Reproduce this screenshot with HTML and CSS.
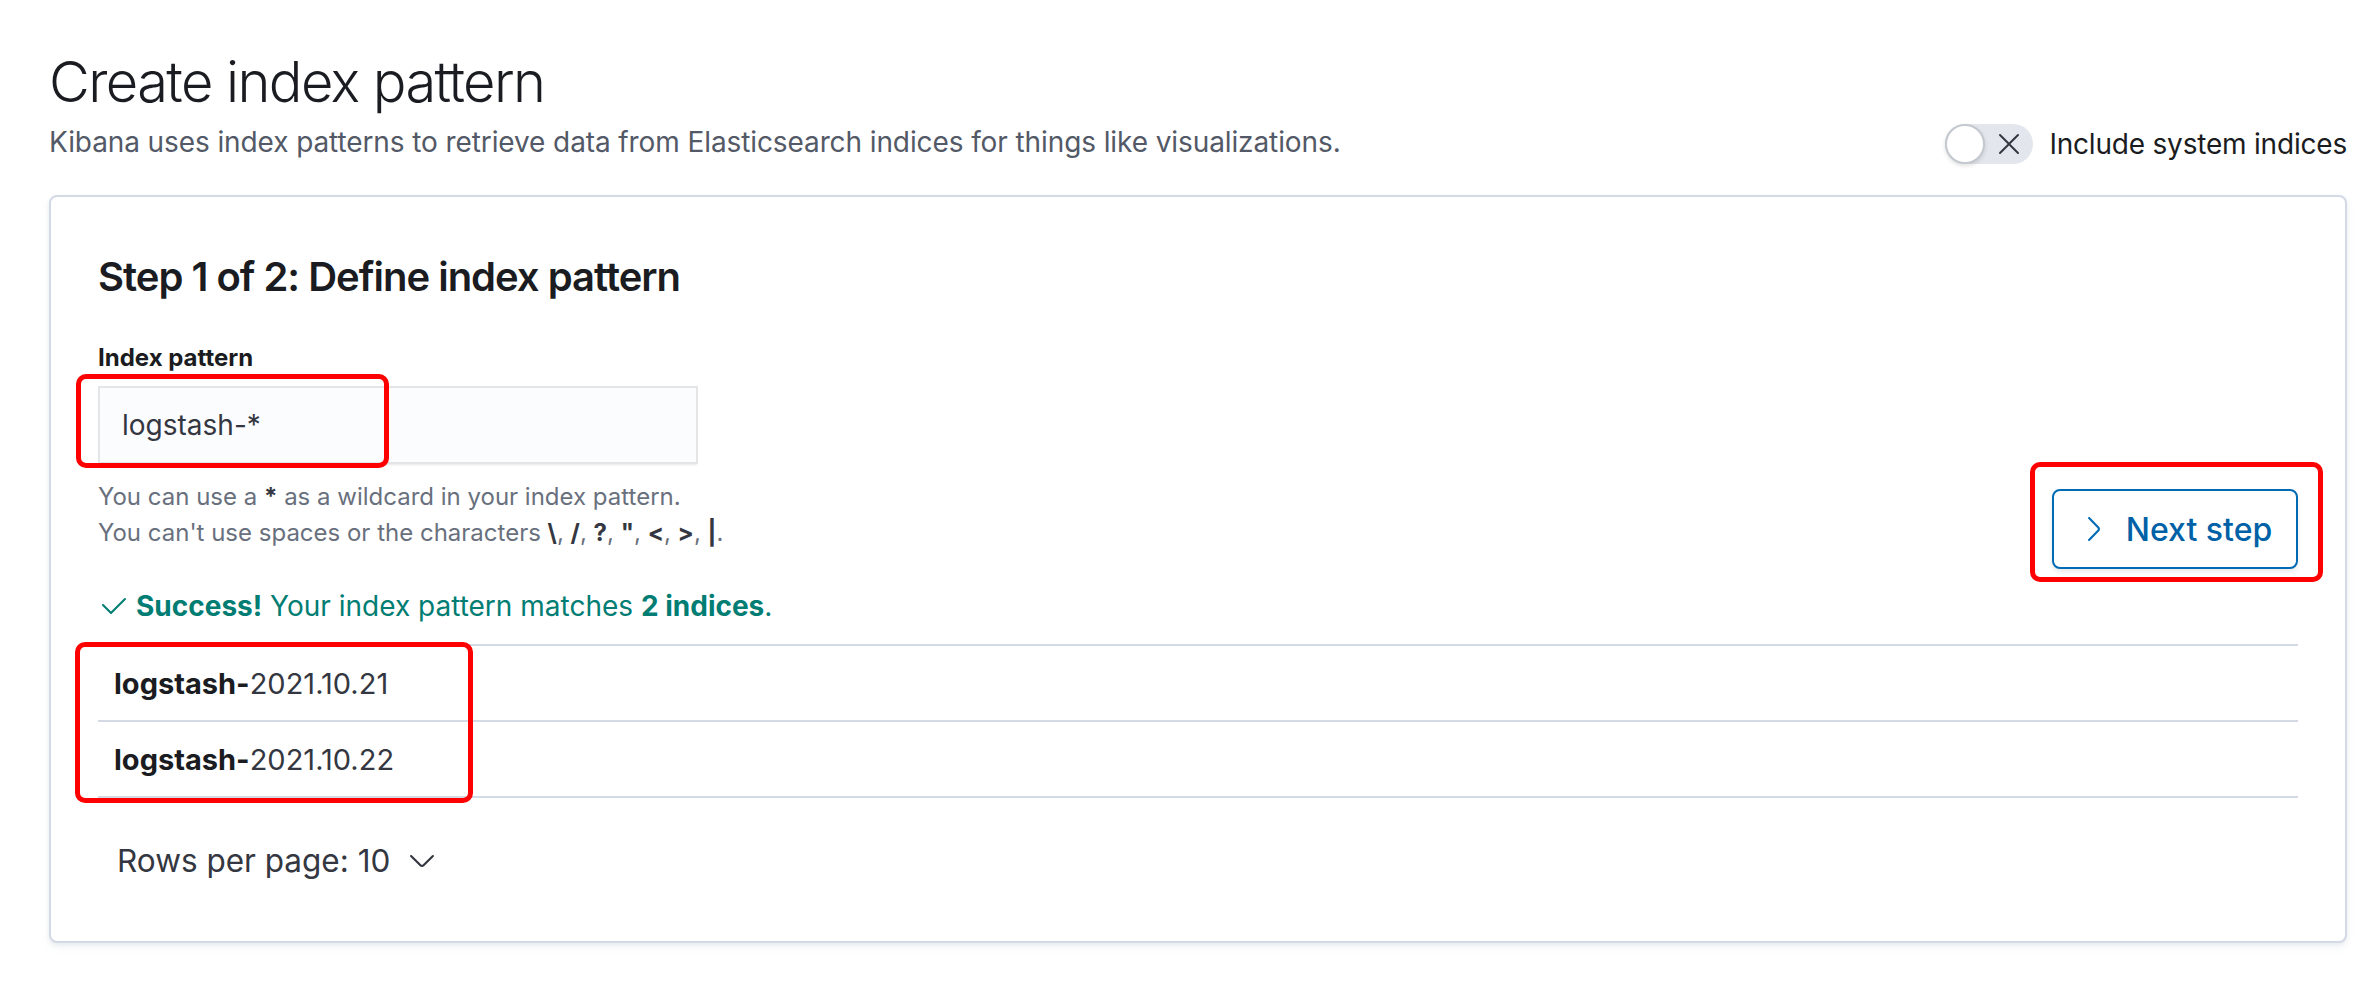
FILE: index.html
```html
<!DOCTYPE html>
<html lang="en">
<head>
<meta charset="utf-8">
<title>Create index pattern</title>
<link rel="stylesheet" href="styles.css">
</head>
<body>
<div class="page">
  <header class="page-header">
    <div class="page-title">
      <h1 class="title">Create index pattern</h1>
      <p class="subtitle">Kibana uses index patterns to retrieve data from Elasticsearch indices for things like visualizations.</p>
    </div>
    <label class="switch">
      <span class="switch-track">
        <span class="switch-knob"></span>
        <svg class="switch-icon" viewBox="0 0 16 16" width="32" height="32"><path d="M7.293 8L3.146 3.854a.5.5 0 11.708-.708L8 7.293l4.146-4.147a.5.5 0 01.708.708L8.707 8l4.147 4.146a.5.5 0 01-.708.708L8 8.707l-4.146 4.147a.5.5 0 01-.708-.708L7.293 8z"/></svg>
      </span>
      <span class="switch-label">Include system indices</span>
    </label>
  </header>

  <section class="panel">
    <h2 class="step-title">Step 1 of 2: Define index pattern</h2>
    <div class="form-row">
      <div class="form">
        <div class="field-label">Index pattern</div>
        <div class="field-input">logstash-*</div>
        <div class="help">
          <div>You can use a <strong>*</strong> as a wildcard in your index pattern.</div>
          <div>You can't use spaces or the characters <strong>\</strong>, <strong>/</strong>, <strong>?</strong>, <strong>"</strong>, <strong>&lt;</strong>, <strong>&gt;</strong>, <strong>|</strong>.</div>
        </div>
      </div>
      <button class="btn">
        <svg class="btn-icon" viewBox="0 0 16 16" width="32" height="32"><path d="M5.157 13.069l4.611-4.685a.546.546 0 000-.768L5.158 2.93a.552.552 0 010-.771.53.53 0 01.759 0l4.61 4.684c.631.641.63 1.672 0 2.312l-4.61 4.684a.53.53 0 01-.76 0 .552.552 0 010-.771z"/></svg>
        <span>Next step</span>
      </button>
    </div>

    <div class="success">
      <svg class="success-icon" viewBox="0 0 16 16" width="32" height="32"><path d="M6.5 12a.502.502 0 01-.354-.146l-4-4a.5.5 0 01.708-.708L6.5 10.793l6.646-6.647a.5.5 0 01.708.708l-7 7A.502.502 0 016.5 12"/></svg>
      <span><strong>Success!</strong> Your index pattern matches <strong>2 indices</strong>.</span>
    </div>

    <div class="table">
      <div class="row"><strong>logstash-</strong>2021.10.21</div>
      <div class="row"><strong>logstash-</strong>2021.10.22</div>
    </div>

    <div class="pagination">
      <span>Rows per page: 10</span>
      <svg class="page-icon" viewBox="0 0 16 16" width="32" height="32"><path d="M13.069 5.157L8.384 9.768a.546.546 0 01-.768 0L2.93 5.158a.552.552 0 00-.771 0 .53.53 0 000 .759l4.684 4.61c.641.631 1.672.63 2.312 0l4.684-4.61a.53.53 0 000-.759.552.552 0 00-.771 0z"/></svg>
    </div>
  </section>

  <div class="mark mark-input"></div>
  <div class="mark mark-button"></div>
  <div class="mark mark-rows"></div>
</div>
</body>
</html>
```
FILE: styles.css
```css
* { box-sizing: border-box; }
html, body { margin: 0; background: #fff; }
body {
  font-family: Inter, "Noto Sans", "Liberation Sans", sans-serif;
  color: #343741;
  width: 2376px;
  height: 990px;
  overflow: hidden;
}
.page {
  position: relative;
  padding: 48px 29px 0 49px;
}
.page-header {
  display: flex;
  justify-content: space-between;
  align-items: flex-end;
}
.title {
  margin: 0;
  font-size: 56px;
  line-height: 68px;
  font-weight: 300;
  color: #1a1c21;
  letter-spacing: -1.6px;
}
.subtitle {
  margin: 6px 0 0;
  font-size: 28px;
  line-height: 40px;
  color: #535966;
  letter-spacing: -0.1px;
}
.switch {
  display: flex;
  align-items: center;
  gap: 16px;
  margin-bottom: -2px;
}
.switch-track {
  position: relative;
  width: 88px;
  height: 40px;
  border-radius: 20px;
  background: #e3e6ec;
  display: flex;
  align-items: center;
  justify-content: flex-end;
  padding-right: 8px;
}
.switch-knob {
  position: absolute;
  left: 0;
  top: 0;
  width: 40px;
  height: 40px;
  border-radius: 50%;
  background: #fff;
  border: 2px solid #c4c8cf;
  box-shadow: 0 2px 4px rgba(0,0,0,0.12);
}
.switch-icon { fill: #343741; }
.switch-label {
  font-size: 28px;
  line-height: 40px;
  color: #1a1c21;
  letter-spacing: -0.2px;
}
.panel {
  margin-top: 33px;
  border: 2px solid #d3dae6;
  border-radius: 8px;
  background: #fff;
  padding: 56px 47px 60px;
  box-shadow: 0 2px 4px rgba(152,162,179,0.15), 0 4px 8px rgba(152,162,179,0.1);
}
.step-title {
  margin: 0;
  font-size: 40px;
  line-height: 48px;
  font-weight: 600;
  color: #1a1c21;
  letter-spacing: -1px;
}
.form-row {
  display: flex;
  justify-content: space-between;
  align-items: flex-end;
  margin-top: 39px;
}
.field-label {
  font-size: 24px;
  line-height: 36px;
  font-weight: 700;
  color: #1a1c21;
}
.field-input {
  margin-top: 10px;
  width: 600px;
  height: 78px;
  background: #fbfcfd;
  box-shadow: inset 0 0 0 2px rgba(0,0,0,0.09), 0 2px 2px -1px rgba(0,0,0,0.1);
  padding: 0 24px;
  display: flex;
  align-items: center;
  font-size: 28px;
  color: #343741;
}
.help {
  margin-top: 15px;
  font-size: 24px;
  line-height: 36px;
  color: #69707d;
  white-space: nowrap;
}
.help strong { color: #343741; font-weight: 700; }
.btn {
  margin-bottom: -18px;
  width: 246px;
  height: 80px;
  border: 2px solid #006bb4;
  border-radius: 8px;
  background: #fff;
  color: #0061a6;
  font-family: inherit;
  font-size: 32px;
  font-weight: 500;
  white-space: nowrap;
  display: flex;
  align-items: center;
  justify-content: center;
  gap: 16px;
  padding: 0;
  box-shadow: 0 3px 4px rgba(0,0,0,0.08);
}
.btn-icon { fill: #006bb4; flex: none; }
.success {
  margin-top: 35px;
  display: flex;
  align-items: center;
  gap: 6px;
  font-size: 28px;
  line-height: 40px;
  color: #017d73;
}
.success-icon { fill: #017d73; flex: none; }
.table {
  margin-top: 18px;
  border-top: 2px solid #d3dae6;
}
.row {
  height: 76px;
  border-bottom: 2px solid #d3dae6;
  display: flex;
  align-items: center;
  padding-left: 16px;
  font-size: 29px;
  color: #343741;
}
.row strong { color: #1a1c21; font-weight: 700; }
.pagination {
  margin-top: 43px;
  margin-left: 19px;
  display: flex;
  align-items: center;
  gap: 16px;
  font-size: 31.5px;
  line-height: 40px;
  color: #343741;
}
.page-icon { fill: #343741; }
.mark {
  position: absolute;
  border: 5px solid #ff0000;
  border-radius: 10px;
}
.mark-input { left: 76px; top: 374px; width: 313px; height: 94px; }
.mark-button { left: 2030px; top: 462px; width: 293px; height: 120px; }
.mark-rows { left: 75px; top: 642px; width: 398px; height: 161px; }
```
